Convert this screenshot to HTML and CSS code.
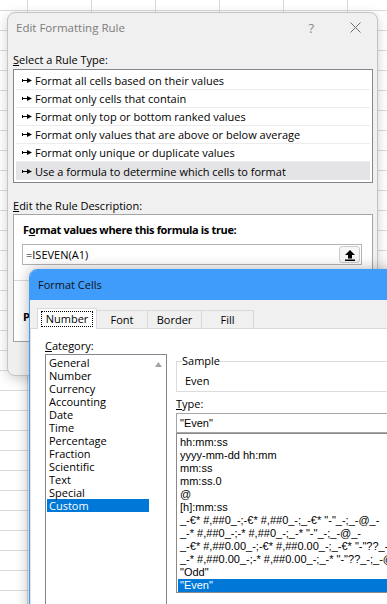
FILE: index.html
```html
<!DOCTYPE html>
<html lang="en">
<head>
  <meta charset="UTF-8" />
  <meta name="viewport" content="width=device-width, initial-scale=1.0" />
  <title>Edit Formatting Rule</title>
  <link rel="stylesheet" href="styles.css">
</head>
<body>
  <div class="dlg rule-dlg">
    <div class="rule-title">
      <span>Edit Formatting Rule</span>
      <span class="title-btns">
        <span class="help">?</span>
        <svg class="close" width="11" height="11" viewBox="0 0 11 11"><path d="M0.5 0.5l10 10M10.5 0.5l-10 10" stroke="#6f6f6f" stroke-width="1" fill="none"/></svg>
      </span>
    </div>

    <div class="label first"><u>S</u>elect a Rule Type:</div>
    <ul class="rule-list">
      <li><svg class="arrow" width="10" height="5" viewBox="0 0 10 5"><path d="M0.5 1v3M1 2.5h4.5" stroke="#000" fill="none"/><path d="M5 0l5 2.5-5 2.5z" fill="#000"/></svg>Format all cells based on their values</li>
      <li><svg class="arrow" width="10" height="5" viewBox="0 0 10 5"><path d="M0.5 1v3M1 2.5h4.5" stroke="#000" fill="none"/><path d="M5 0l5 2.5-5 2.5z" fill="#000"/></svg>Format only cells that contain</li>
      <li><svg class="arrow" width="10" height="5" viewBox="0 0 10 5"><path d="M0.5 1v3M1 2.5h4.5" stroke="#000" fill="none"/><path d="M5 0l5 2.5-5 2.5z" fill="#000"/></svg>Format only top or bottom ranked values</li>
      <li><svg class="arrow" width="10" height="5" viewBox="0 0 10 5"><path d="M0.5 1v3M1 2.5h4.5" stroke="#000" fill="none"/><path d="M5 0l5 2.5-5 2.5z" fill="#000"/></svg>Format only values that are above or below average</li>
      <li><svg class="arrow" width="10" height="5" viewBox="0 0 10 5"><path d="M0.5 1v3M1 2.5h4.5" stroke="#000" fill="none"/><path d="M5 0l5 2.5-5 2.5z" fill="#000"/></svg>Format only unique or duplicate values</li>
      <li class="selected"><svg class="arrow" width="10" height="5" viewBox="0 0 10 5"><path d="M0.5 1v3M1 2.5h4.5" stroke="#000" fill="none"/><path d="M5 0l5 2.5-5 2.5z" fill="#000"/></svg>Use a formula to determine which cells to format</li>
    </ul>

    <div class="label second"><u>E</u>dit the Rule Description:</div>
    <div class="desc">
      <div class="desc-label">F<u>o</u>rmat values where this formula is true:</div>
      <div class="formula">
        <span>=ISEVEN(A1)</span>
        <button class="collapse">
          <svg width="12" height="12" viewBox="0 0 12 12"><path d="M6 1l5 5H8v3.5H4V6H1z" fill="#000"/><rect x="1" y="10.5" width="10" height="1.5" fill="#000"/></svg>
        </button>
      </div>
      <div class="preview">Preview:</div>
    </div>
  </div>

  <div class="dlg cells-dlg">
    <div class="cells-title">Format Cells</div>
    <div class="tabs">
      <div class="tab active"><span class="focus">Number</span></div>
      <div class="tab tab-font">Font</div>
      <div class="tab tab-border">Border</div>
      <div class="tab tab-fill">Fill</div>
    </div>
    <div class="pane">
      <div class="col-left">
        <div class="label"><u>C</u>ategory:</div>
        <div class="cat-list">
          <ul>
            <li>General</li>
            <li>Number</li>
            <li>Currency</li>
            <li>Accounting</li>
            <li>Date</li>
            <li>Time</li>
            <li>Percentage</li>
            <li>Fraction</li>
            <li>Scientific</li>
            <li>Text</li>
            <li>Special</li>
            <li class="selected">Custom</li>
          </ul>
          <div class="scroll">
            <svg width="7" height="5" viewBox="0 0 7 5"><path d="M3.5 0L7 5H0z" fill="#a3a3a3"/></svg>
          </div>
        </div>
      </div>

      <div class="col-right">
        <fieldset class="sample">
          <legend>Sample</legend>
          <div class="sample-text">Even</div>
        </fieldset>
        <div class="label type-label"><u>T</u>ype:</div>
        <div class="type-input">"Even"</div>
        <ul class="type-list">
          <li>hh:mm:ss</li>
          <li>yyyy-mm-dd hh:mm</li>
          <li>mm:ss</li>
          <li>mm:ss.0</li>
          <li>@</li>
          <li>[h]:mm:ss</li>
          <li>_-€* #,##0_-;-€* #,##0_-;_-€* "-"_-;_-@_-</li>
          <li>_-* #,##0_-;-* #,##0_-;_-* "-"_-;_-@_-</li>
          <li>_-€* #,##0.00_-;-€* #,##0.00_-;_-€* "-"??_-;_-@_-</li>
          <li>_-* #,##0.00_-;-* #,##0.00_-;_-* "-"??_-;_-@_-</li>
          <li>"Odd"</li>
          <li class="selected">"Even"</li>
        </ul>
      </div>
    </div>
  </div>
</body>
</html>
```

FILE: styles.css
```css
* { box-sizing: border-box; }

body {
  margin: 0;
  width: 387px;
  height: 604px;
  overflow: hidden;
  position: relative;
  font-family: "Open Sans", "Segoe UI", sans-serif;
  font-size: 11px;
  color: #000;
  background-color: #fff;
  background-image:
    linear-gradient(to right, #dadada 1px, transparent 1px),
    linear-gradient(to bottom, #dadada 1px, transparent 1px);
  background-size: 64px 20px;
  background-position: 27px 10px;
}

ul {
  list-style: none;
  margin: 0;
  padding: 0;
}

u { text-underline-offset: 1px; }

.label {
  line-height: 16px;
  height: 16px;
}

/* windows on the sheet */
.dlg { position: absolute; }

/* ---------- Edit Formatting Rule ---------- */
.rule-dlg {
  left: 7px;
  top: 12px;
  width: 371px;
  height: 364px;
  padding: 0 4px 0 5px;
  background: #f0f0f0;
  border: 1px solid #c4c4c4;
  border-radius: 8px;
  box-shadow: 0 3px 12px rgba(0, 0, 0, 0.18);
}

.rule-title {
  height: 29px;
  display: flex;
  align-items: center;
  justify-content: space-between;
  padding: 0 12px 0 3px;
  font-size: 11.5px;
  color: #7d7d7d;
}

.title-btns {
  display: flex;
  align-items: center;
  gap: 36px;
}

.help {
  font-size: 13px;
  color: #8a8a8a;
}

.label.first { margin-top: 10px; }

.rule-list {
  margin-top: 1px;
  background: #fff;
  border: 1px solid #828790;
  padding: 2px 2px;
}

.rule-list li {
  height: 18px;
  display: flex;
  align-items: center;
  gap: 3px;
  padding-left: 6px;
  border-bottom: 1px solid #ececec;
  white-space: nowrap;
}

.rule-list li:last-child { border-bottom: none; }

.rule-list li.selected { background: #e4e4e6; }

.label.second { margin-top: 15px; }

.desc {
  height: 128px;
  background: #fff;
  border: 1px solid #a5a5a5;
}

.desc-label {
  font-weight: bold;
  letter-spacing: -0.35px;
  line-height: 16px;
  padding: 7px 0 0 9px;
}

.formula {
  height: 21px;
  margin: 6px 10px 0 8px;
  display: flex;
  align-items: center;
  border: 1px solid #b4b4b4;
  padding-left: 3px;
}

.collapse {
  margin-left: auto;
  margin-right: 1px;
  width: 21px;
  height: 17px;
  padding: 0;
  display: flex;
  align-items: center;
  justify-content: center;
  background: #f7f7f7;
  border: 1px solid #cacaca;
  border-radius: 3px;
}

.preview {
  margin-top: 15px;
  border-top: 1px solid #d9d9d9;
  padding: 28px 0 0 9px;
  line-height: 16px;
  font-weight: bold;
}

/* ---------- Format Cells ---------- */
.cells-dlg {
  left: 29px;
  top: 269px;
  width: 420px;
  height: 400px;
  display: flex;
  flex-direction: column;
  background: #f0f0f0;
  border: 1px solid #3d9bfa;
  border-radius: 8px 8px 0 0;
  overflow: hidden;
  box-shadow: 0 0 14px rgba(0, 0, 0, 0.3);
}

.cells-title {
  height: 30px;
  line-height: 30px;
  padding-left: 8px;
  background: #409cfa;
  color: #111;
}

.tabs {
  height: 28px;
  padding: 8px 0 0 7px;
  display: flex;
  align-items: flex-end;
}

.tab {
  height: 18px;
  display: flex;
  align-items: center;
  justify-content: center;
  border: 1px solid #d9d9d9;
  border-bottom: none;
  margin-left: -1px;
  background: #f0f0f0;
}

.tab.active {
  width: 60px;
  height: 21px;
  margin-left: 0;
  margin-bottom: -1px;
  position: relative;
  z-index: 1;
  background: #fff;
}

.focus {
  border: 1px dotted #000;
  padding: 0 4px;
  line-height: 14px;
}

.tab-font { width: 52px; }
.tab-border { width: 55px; }
.tab-fill { width: 53px; }

.pane {
  flex: 1;
  display: flex;
  gap: 9px;
  padding: 9px 0 0 14px;
  background: #fff;
  border-top: 1px solid #d9d9d9;
  border-left: 1px solid #e3e3e3;
}

.col-left { width: 122px; }

.cat-list {
  height: 260px;
  display: flex;
  border: 1px solid #828790;
}

.cat-list ul {
  flex: 1;
  padding: 1px;
}

.cat-list li {
  height: 13px;
  line-height: 13px;
  padding-left: 2px;
  white-space: nowrap;
}

.cat-list li.selected,
.type-list li.selected {
  background: #0078d7;
  color: #fff;
}

.scroll {
  width: 16px;
  display: flex;
  justify-content: center;
  padding-top: 7px;
}

.scroll svg { display: block; }

.col-right {
  width: 260px;
  margin-top: 15px;
}

.sample {
  margin: 0;
  min-width: 0;
  padding: 4px 0 2px 5px;
  border: 1px solid #dcdcdc;
}

.sample legend {
  padding: 0;
  line-height: 16px;
}

.sample-text {
  line-height: 16px;
  padding-left: 3px;
}

.label.type-label { margin-top: 4px; }

.type-input,
.type-list {
  font-family: "Liberation Sans", Arial, sans-serif;
  font-size: 11px;
}

.type-input {
  height: 20px;
  margin-top: 1px;
  line-height: 18px;
  padding-left: 3px;
  border: 1px solid #a6a6a6;
}

.type-list {
  height: 160px;
  padding: 2px 0 0 1px;
  border: 1px solid #8a8a8a;
  overflow: hidden;
}

.type-list li {
  height: 13px;
  line-height: 13px;
  padding-left: 2px;
  white-space: nowrap;
}
```
